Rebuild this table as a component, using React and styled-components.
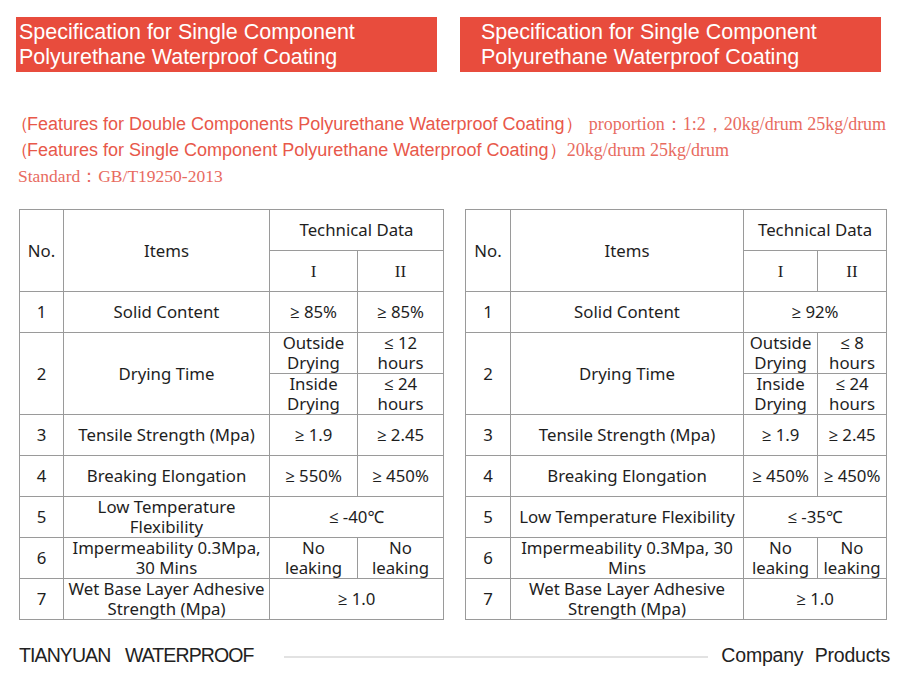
import styled, { createGlobalStyle } from "styled-components";

const GlobalStyle = createGlobalStyle`
  body {
    margin: 0;
    background: #ffffff;
  }
`;

const Page = styled.div`
  width: 905px;
  height: 682px;
  overflow: hidden;
  padding: 17px 0 0 16px;
  box-sizing: border-box;
  font-family: "Liberation Sans", Arial, sans-serif;
`;

const BannerRow = styled.div`
  display: flex;
  gap: 23px;
`;

const Banner = styled.div`
  width: 421px;
  height: 55px;
  background: #e84c3d;
  color: #ffffff;
  font-size: 21.5px;
  line-height: 25px;
  padding: 3px 0 0 ${(p) => p.$indent}px;
  box-sizing: border-box;
  white-space: nowrap;
`;

const Features = styled.div`
  margin-top: 39px;
  padding-left: 2px;
  color: #e8584a;
`;

const FeatureLine = styled.div`
  height: 26px;
  line-height: 26px;
  white-space: nowrap;
`;

const Lead = styled.span`
  font-family: "Liberation Sans", Arial, sans-serif;
  font-size: 18px;
`;

const Paren = styled.span`
  margin-left: ${(p) => (p.$open ? "-7px" : "0")};
  margin-right: ${(p) => (p.$open ? "-2px" : "-6px")};
`;

const Note = styled.span`
  font-family: "Liberation Serif", "Times New Roman", serif;
  font-size: ${(p) => p.$size || 18}px;
  color: #e86b5f;
  margin-left: ${(p) => p.$gap || 0}px;
`;

const Tables = styled.div`
  display: flex;
  gap: 21px;
  margin-top: 20px;
  padding-left: 3px;
`;

const Table = styled.table`
  border-collapse: collapse;
  table-layout: fixed;
  width: ${(p) => p.$width}px;
  font-family: "Noto Sans", "Open Sans", sans-serif;
  font-size: 16.8px;
  color: #1e1e1e;

  td,
  th {
    border: 1px solid #9a9a9a;
    text-align: center;
    vertical-align: middle;
    font-weight: 400;
    padding: 0 1px;
    line-height: 20px;
    height: 40px;
    white-space: nowrap;
  }
`;

const Roman = styled.span`
  font-family: "Liberation Serif", "Times New Roman", serif;
  font-size: 17px;
`;

const Footer = styled.div`
  display: flex;
  align-items: center;
  margin-top: 24px;
  padding: 0 15px 0 3px;
  font-family: "Liberation Sans", sans-serif;
  font-size: 19.5px;
  color: #222222;
`;

const Brand = styled.span`
  letter-spacing: -0.9px;
  word-spacing: 10px;
  white-space: nowrap;
`;

const Rule = styled.div`
  flex: 1;
  height: 2px;
  background: #e2e2e2;
  margin: 2px 13px 0 30px;
`;

const Tagline = styled.span`
  letter-spacing: -0.2px;
  word-spacing: 6px;
  white-space: nowrap;
`;

const SpecTable = ({ cols, width, data }) => (
  <Table $width={width}>
    <colgroup>
      {cols.map((c, i) => (
        <col key={i} style={{ width: c }} />
      ))}
    </colgroup>
    <tbody>
      <tr>
        <th rowSpan={2}>No.</th>
        <th rowSpan={2}>Items</th>
        <th colSpan={2}>Technical Data</th>
      </tr>
      <tr>
        <th><Roman>I</Roman></th>
        <th><Roman>II</Roman></th>
      </tr>
      <tr>
        <td>1</td>
        <td>Solid Content</td>
        {data.solid.length === 1 ? (
          <td colSpan={2}>{data.solid[0]}</td>
        ) : (
          <>
            <td>{data.solid[0]}</td>
            <td>{data.solid[1]}</td>
          </>
        )}
      </tr>
      <tr>
        <td rowSpan={2}>2</td>
        <td rowSpan={2}>Drying Time</td>
        <td>Outside<br />Drying</td>
        <td>{data.outside}<br />hours</td>
      </tr>
      <tr>
        <td>Inside<br />Drying</td>
        <td>≤ 24<br />hours</td>
      </tr>
      <tr>
        <td>3</td>
        <td>Tensile Strength (Mpa)</td>
        <td>≥ 1.9</td>
        <td>≥ 2.45</td>
      </tr>
      <tr>
        <td>4</td>
        <td>Breaking Elongation</td>
        <td>{data.elong[0]}</td>
        <td>{data.elong[1]}</td>
      </tr>
      <tr>
        <td>5</td>
        <td>{data.lowTemp}</td>
        <td colSpan={2}>{data.temp}</td>
      </tr>
      <tr>
        <td>6</td>
        <td>{data.imper}</td>
        <td>No<br />leaking</td>
        <td>No<br />leaking</td>
      </tr>
      <tr>
        <td>7</td>
        <td>Wet Base Layer Adhesive<br />Strength (Mpa)</td>
        <td colSpan={2}>≥ 1.0</td>
      </tr>
    </tbody>
  </Table>
);

const left = {
  solid: ["≥ 85%", "≥ 85%"],
  outside: "≤ 12",
  elong: ["≥ 550%", "≥ 450%"],
  lowTemp: (
    <>
      Low Temperature
      <br />
      Flexibility
    </>
  ),
  temp: "≤ -40℃",
  imper: (
    <>
      Impermeability 0.3Mpa,
      <br />
      30 Mins
    </>
  ),
};

const right = {
  solid: ["≥ 92%"],
  outside: "≤ 8",
  elong: ["≥ 450%", "≥ 450%"],
  lowTemp: "Low Temperature Flexibility",
  temp: "≤ -35℃",
  imper: (
    <>
      Impermeability 0.3Mpa, 30
      <br />
      Mins
    </>
  ),
};

const FeatureTitle = ({ children }) => (
  <Lead>
    <Paren $open>（</Paren>
    {children}
    <Paren>）</Paren>
  </Lead>
);

const App = () => {
  return (
    <>
      <GlobalStyle />
      <Page>
        <BannerRow>
          <Banner $indent={3}>
            Specification for Single Component
            <br />
            Polyurethane Waterproof Coating
          </Banner>
          <Banner $indent={21}>
            Specification for Single Component
            <br />
            Polyurethane Waterproof Coating
          </Banner>
        </BannerRow>

        <Features>
          <FeatureLine>
            <FeatureTitle>Features for Double Components Polyurethane Waterproof Coating</FeatureTitle>
            <Note $gap={12}>proportion：1:2，20kg/drum 25kg/drum</Note>
          </FeatureLine>
          <FeatureLine>
            <FeatureTitle>Features for Single Component Polyurethane Waterproof Coating</FeatureTitle>
            <Note $gap={6}>20kg/drum 25kg/drum</Note>
          </FeatureLine>
          <FeatureLine>
            <Note $size={17.5}>Standard：GB/T19250-2013</Note>
          </FeatureLine>
        </Features>

        <Tables>
          <SpecTable cols={[44, 206, 88, 86]} width={424} data={left} />
          <SpecTable cols={[45, 233, 74, 69]} width={421} data={right} />
        </Tables>

        <Footer>
          <Brand>TIANYUAN WATERPROOF</Brand>
          <Rule />
          <Tagline>Company Products</Tagline>
        </Footer>
      </Page>
    </>
  );
};

export default App;
